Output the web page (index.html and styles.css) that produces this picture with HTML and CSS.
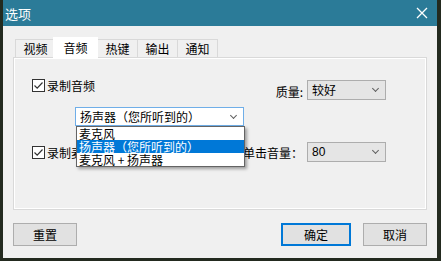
FILE: index.html
```html
<!DOCTYPE html>
<html lang="zh-CN">
<head>
	<meta charset="UTF-8">
	<title>选项</title>
	<link rel="stylesheet" href="styles.css">
</head>
<body>
	<div class="win">
		<!-- 标题栏 -->
		<div class="win-title">
			<span>选项</span>
			<svg class="win-close" width="12" height="12" viewBox="0 0 12 12">
				<path d="M1 1 L11 11 M11 1 L1 11" stroke="#fff" stroke-width="1.3" fill="none"/>
			</svg>
		</div>

		<div class="win-body">
			<!-- 标签页 -->
			<div class="tabs">
				<div class="tab">视频</div>
				<div class="tab tab-on">音频</div>
				<div class="tab">热键</div>
				<div class="tab">输出</div>
				<div class="tab">通知</div>
			</div>

			<div class="panel">
				<div class="row row1">
					<label class="chk">
						<svg width="13" height="13" viewBox="0 0 13 13"><rect x="0.5" y="0.5" width="12" height="12" fill="#fff" stroke="#333"/><path d="M2.5 6.5 L5.2 9.2 L10.5 3.5" stroke="#333" stroke-width="1.2" fill="none"/></svg>
						录制音频
					</label>
					<div class="field field1">
						<span>质量:</span>
						<div class="combo combo-s">较好<i class="arrow"></i></div>
					</div>
				</div>

				<div class="row row2">
					<div class="combo combo-src">扬声器（您所听到的）<i class="arrow"></i>
						<!-- 展开的下拉列表 -->
						<ul class="list">
							<li>麦克风</li>
							<li class="on">扬声器（您所听到的）</li>
							<li>麦克风 + 扬声器</li>
						</ul>
					</div>
				</div>

				<div class="row row3">
					<label class="chk">
						<svg width="13" height="13" viewBox="0 0 13 13"><rect x="0.5" y="0.5" width="12" height="12" fill="#fff" stroke="#333"/><path d="M2.5 6.5 L5.2 9.2 L10.5 3.5" stroke="#333" stroke-width="1.2" fill="none"/></svg>
						录制麦克风
					</label>
					<div class="field">
						<span>单击音量：</span>
						<div class="combo combo-s num">80<i class="arrow"></i></div>
					</div>
				</div>
			</div>

			<!-- 按钮 -->
			<div class="btns">
				<a class="btn" href="#">重置</a>
				<span class="grow"></span>
				<a class="btn btn-ok" href="#">确定</a>
				<a class="btn" href="#">取消</a>
			</div>
		</div>
	</div>
</body>
</html>
```

FILE: styles.css
```css
body {
	margin: 0;
	padding: 0;
	background: #232a1f;
	font-family: "Noto Sans CJK SC", "Noto Sans", sans-serif;
	font-size: 12px;
	color: #000;
}

/*窗口*/
.win {
	width: 434px;
	height: 258px;
	margin-left: 3px;
	background: #f0f0f0;
	display: flex;
	flex-direction: column;
}
.win-title {
	height: 26px;
	background: #2b7b98;
	color: #fff;
	font-size: 13px;
	display: flex;
	align-items: center;
	justify-content: space-between;
	padding: 0 9px 0 2px;
}
.win-close {
	display: block;
}
.win-body {
	padding: 11px 10px 0 10px;
}

/*标签页*/
.tabs {
	display: flex;
	align-items: flex-end;
	height: 20px;
	padding-left: 2px;
}
.tab {
	height: 18px;
	line-height: 18px;
	padding: 0 7px;
	border: 1px solid #d9d9d9;
	border-bottom: none;
	margin-right: -1px;
	background: #f0f0f0;
	box-sizing: border-box;
	width: 41px;
	text-align: center;
}
.tab-on {
	height: 21px;
	line-height: 19px;
	background: #fff;
	width: 45px;
	margin: 0 -1px -1px -2px;
	position: relative;
	z-index: 1;
	border-color: #fff;
}

.panel {
	height: 153px;
	border: 1px solid #d9d9d9;
	box-shadow: inset 1px 1px 0 #fff, inset -1px -1px 0 #fff;
	box-sizing: border-box;
	padding: 20px 40px 0 18px;
}

.row {
	display: flex;
	justify-content: space-between;
}
.row1 {
	align-items: flex-start;
	height: 21px;
}
.row2 {
	margin-top: 8px;
	padding-left: 43px;
}
.row3 {
	margin-top: 16px;
	align-items: center;
}

.chk {
	display: flex;
	align-items: center;
	gap: 2px;
	height: 14px;
}
.chk svg {
	display: block;
}

.field {
	display: flex;
	align-items: center;
	gap: 4px;
}
.field1 {
	margin-top: 1px;
}
.field1 span {
	margin-top: 4px;
}

/*下拉框*/
.combo {
	position: relative;
	height: 20px;
	line-height: 18px;
	box-sizing: border-box;
	border: 1px solid #adadad;
	background: #e5e5e5;
	padding-left: 4px;
}
.combo-s {
	width: 79px;
}
.num {
	font-family: "Liberation Sans", sans-serif;
}
.combo-src {
	width: 169px;
	height: 19px;
	line-height: 17px;
	background: #fff;
	border-color: #6faee8;
}
.arrow {
	position: absolute;
	right: 7px;
	top: 5px;
	width: 4px;
	height: 4px;
	border-right: 1px solid #606060;
	border-bottom: 1px solid #606060;
	transform: rotate(45deg);
}

.list {
	position: absolute;
	top: 18px;
	left: 0;
	width: 169px;
	margin: 0;
	padding: 0;
	list-style: none;
	background: #fff;
	border: 1px solid #646464;
	box-sizing: border-box;
	box-shadow: 2px 2px 3px rgba(0, 0, 0, 0.35);
	z-index: 5;
}
.list li {
	height: 13px;
	line-height: 13px;
	padding-left: 2px;
}
.list li.on {
	background: #0078d7;
	color: #fff;
}

/*按钮*/
.btns {
	display: flex;
	margin-top: 13px;
	gap: 12px;
}
.grow {
	flex: 1;
}
.btn {
	display: block;
	width: 64px;
	height: 23px;
	line-height: 21px;
	box-sizing: border-box;
	border: 1px solid #adadad;
	background: #e1e1e1;
	color: #000;
	text-align: center;
	text-decoration: none;
}
.btn-ok {
	width: 70px;
	border: 2px solid #0078d7;
	line-height: 19px;
}
```
